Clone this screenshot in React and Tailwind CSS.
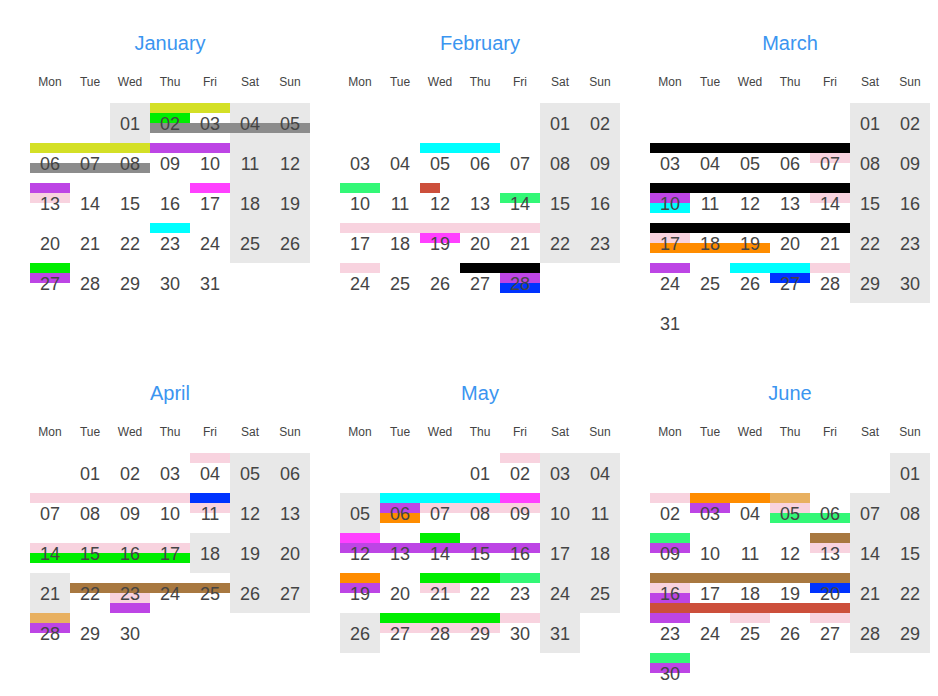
import React from "react";

const C = {
  y: "#d4e026", g: "#00ee00", gr: "#8c8c8c", p: "#bd45e5", pk: "#f8d3df", m: "#ff40ff",
  c: "#00ffff", lg: "#33f877", r: "#cc4f3b", k: "#000000", b: "#0033ff", o: "#ff8c00",
  t: "#e8b060", br: "#a87840",
};

const months = [
  { name: "January", start: 2, days: 31, hol: [1], bars: [
    [0,3,2,0,"y"],[0,3,1,1,"g"],[0,3,4,2,"gr"],
    [1,0,3,0,"y"],[1,3,2,0,"p"],[1,0,3,2,"gr"],
    [2,0,1,0,"p"],[2,0,1,1,"pk"],[2,4,1,0,"m"],
    [3,3,1,0,"c"],
    [4,0,1,0,"g"],[4,0,1,1,"p"],
  ]},
  { name: "February", start: 5, days: 28, hol: [], bars: [
    [1,2,2,0,"c"],
    [2,0,1,0,"lg"],[2,2,0.5,0,"r"],[2,4,1,1,"lg"],
    [3,0,5,0,"pk"],[3,2,1,1,"m"],
    [4,0,1,0,"pk"],[4,3,2,0,"k"],[4,4,1,1,"p"],[4,4,1,2,"b"],
  ]},
  { name: "March", start: 5, days: 31, hol: [], bars: [
    [1,0,5,0,"k"],[1,4,1,1,"pk"],
    [2,0,5,0,"k"],[2,0,1,1,"p"],[2,0,1,2,"c"],[2,4,1,1,"pk"],
    [3,0,5,0,"k"],[3,0,1,1,"pk"],[3,0,3,2,"o"],
    [4,0,1,0,"p"],[4,2,2,0,"c"],[4,3,1,1,"b"],[4,4,1,0,"pk"],
  ]},
  { name: "April", start: 1, days: 30, hol: [18,21], bars: [
    [0,4,1,0,"pk"],
    [1,0,4,0,"pk"],[1,4,1,0,"b"],[1,4,1,1,"pk"],
    [2,0,4,1,"pk"],[2,0,4,2,"g"],
    [3,1,4,1,"br"],[3,2,1,2,"pk"],[3,2,1,3,"p"],
    [4,0,1,0,"t"],[4,0,1,1,"p"],
  ]},
  { name: "May", start: 3, days: 31, hol: [5,26], bars: [
    [0,4,1,0,"pk"],
    [1,1,3,0,"c"],[1,4,1,0,"m"],[1,1,1,1,"p"],[1,2,3,1,"pk"],[1,1,1,2,"o"],
    [2,0,1,0,"m"],[2,2,1,0,"g"],[2,0,5,1,"p"],
    [3,0,1,0,"o"],[3,0,1,1,"p"],[3,2,2,0,"g"],[3,4,1,0,"lg"],[3,2,1,1,"pk"],
    [4,1,3,0,"g"],[4,1,3,1,"pk"],[4,4,1,0,"pk"],
  ]},
  { name: "June", start: 6, days: 30, hol: [], bars: [
    [1,0,1,0,"pk"],[1,1,2,0,"o"],[1,3,1,0,"t"],[1,1,1,1,"p"],[1,3,1,1,"pk"],[1,3,2,2,"lg"],
    [2,0,1,0,"lg"],[2,0,1,1,"p"],[2,4,1,0,"br"],[2,4,1,1,"pk"],
    [3,0,5,0,"br"],[3,0,1,1,"pk"],[3,4,1,1,"b"],[3,0,1,2,"p"],[3,0,5,3,"r"],
    [4,0,1,0,"p"],[4,2,1,0,"pk"],[4,4,1,0,"pk"],
    [5,0,1,0,"lg"],[5,0,1,1,"p"],
  ]},
];

const heads = ["Mon","Tue","Wed","Thu","Fri","Sat","Sun"];

function Month({ m }) {
  const cells = [];
  for (let i = 0; i < m.start; i++) cells.push(null);
  for (let d = 1; d <= m.days; d++) cells.push(d);
  while (cells.length % 7) cells.push(null);
  const weeks = [];
  for (let i = 0; i < cells.length; i += 7) weeks.push(cells.slice(i, i + 7));
  return (
    <div className="w-[280px]">
      <div className="h-[30px] flex items-center justify-center text-[20px] text-[#3b95f0]">{m.name}</div>
      <div className="h-[45px] flex items-end pb-[13px]">
        {heads.map(h => <div key={h} className="w-[40px] text-center text-[12px] leading-[15px] text-[#444]">{h}</div>)}
      </div>
      <div className="h-[240px]">
        {weeks.map((w, wi) => (
          <div key={wi} className="relative h-[40px] flex">
            {w.map((d, ci) => {
              const grey = d && (ci >= 5 || m.hol.includes(d));
              return (
                <div key={ci} className={`w-[40px] h-[40px] flex items-center justify-center ${grey ? "bg-[#e8e8e8]" : ""}`}>
                  {d && <span className="relative z-10 text-[18px] text-[#444] leading-none pt-[1px]">{String(d).padStart(2, "0")}</span>}
                </div>
              );
            })}
            {m.bars.filter(b => b[0] === wi).map((b, i) => (
              <div key={i} className="absolute h-[10px]" style={{ left: b[1] * 40, width: b[2] * 40, top: b[3] * 10, background: C[b[4]] }} />
            ))}
          </div>
        ))}
      </div>
    </div>
  );
}

export default function App() {
  return (
    <div className="w-[938px] h-[696px] bg-white pt-[28px] pl-[30px] overflow-hidden" style={{ fontFamily: '"Liberation Sans", Arial, sans-serif' }}>
      <div className="flex gap-[30px]">{months.slice(0, 3).map(m => <Month key={m.name} m={m} />)}</div>
      <div className="flex gap-[30px] mt-[35px]">{months.slice(3).map(m => <Month key={m.name} m={m} />)}</div>
    </div>
  );
}
